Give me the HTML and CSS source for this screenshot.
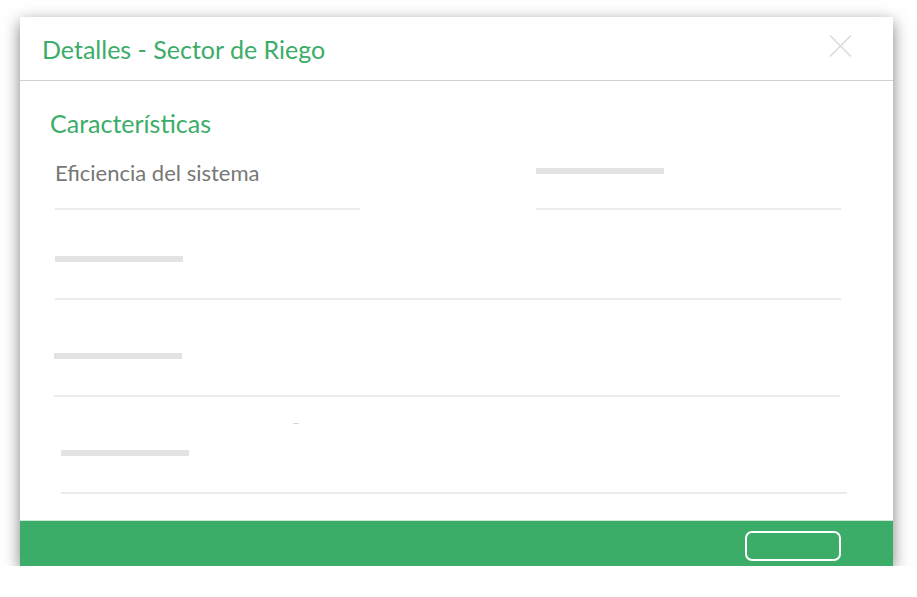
FILE: index.html
```html
<!DOCTYPE html>
<html lang="es">
<head>
<meta charset="utf-8">
<title>Detalles - Sector de Riego</title>
<link rel="stylesheet" href="styles.css">
</head>
<body>
<div class="modal">
  <div class="modal-header">
    <h4 class="modal-title">Detalles - Sector de Riego</h4>
    <button class="close" aria-label="Cerrar">
      <svg width="23" height="22" viewBox="0 0 23 22"><path d="M1 0.5 L22 21.5 M22 0.5 L1 21.5" stroke="#dcdcdc" stroke-width="1.6" fill="none"/></svg>
    </button>
  </div>
  <div class="modal-body">
    <h3 class="section-title">Características</h3>
    <div class="row row-1">
      <div class="field">
        <span class="label-text">Eficiencia del sistema</span>
      </div>
      <div class="field">
        <span class="bar bar-top"></span>
      </div>
    </div>
    <div class="row row-2">
      <div class="field field-wide">
        <span class="bar"></span>
      </div>
    </div>
    <div class="row row-3">
      <div class="field field-wide">
        <span class="bar"></span>
      </div>
      <span class="dash"></span>
    </div>
    <div class="row row-4">
      <div class="field field-wide">
        <span class="bar"></span>
      </div>
    </div>
  </div>
  <div class="modal-footer">
    <button class="btn-outline"></button>
  </div>
</div>
</body>
</html>
```

FILE: styles.css
```css
html, body {
  margin: 0;
  padding: 0;
  background: #ffffff;
}

body {
  font-family: Lato, "Open Sans", "Liberation Sans", sans-serif;
}

.modal {
  margin: 17px 0 0 20px;
  width: 873px;
  height: 549px;
  background: #ffffff;
  display: flex;
  flex-direction: column;
  box-shadow: 0 5px 15px rgba(0, 0, 0, 0.5);
}

.modal-header {
  height: 64px;
  box-sizing: border-box;
  border-bottom: 1px solid #cfcfcf;
  display: flex;
  align-items: center;
  justify-content: space-between;
  padding: 0 41px 0 22px;
}

.modal-title {
  margin: 0;
  font-weight: 400;
  font-size: 25px;
  color: #3bad68;
  line-height: 30px;
}

.close {
  border: 0;
  background: none;
  padding: 0;
  margin-top: -6px;
  width: 23px;
  height: 22px;
  display: block;
}

.modal-body {
  flex: 1;
  padding: 27px 0 0 30px;
}

.section-title {
  margin: 0 0 24px 0;
  font-weight: 400;
  font-size: 25px;
  line-height: 30px;
  color: #3bad68;
}

.row {
  display: flex;
  gap: 176px;
  position: relative;
}

.field {
  width: 305px;
  height: 48px;
  box-sizing: border-box;
  border-bottom: 2px solid #ebebeb;
  display: flex;
  align-items: flex-start;
}

.field-wide {
  width: 786px;
  height: 44px;
}

.row-1 { margin-left: 5px; }
.row-2 { margin-left: 5px; margin-top: 46px; }
.row-3 { margin-left: 4px; margin-top: 53px; }
.row-4 { margin-left: 11px; margin-top: 53px; }

.label-text {
  font-size: 22px;
  line-height: 26px;
  margin-top: -2px;
  color: #777777;
}

.bar {
  display: block;
  width: 128px;
  height: 6px;
  background: #e3e3e3;
}

.bar-top {
  margin-top: 6px;
}

.dash {
  position: absolute;
  left: 239px;
  top: 70px;
  width: 6px;
  height: 1px;
  background: #d8d8d8;
}

.modal-footer {
  height: 46px;
  box-sizing: border-box;
  background: #3bad68;
  border-top: 1px solid #cde8d6;
  display: flex;
  justify-content: flex-end;
  align-items: center;
  padding: 0 52px 0 0;
}

.btn-outline {
  width: 96px;
  height: 30px;
  box-sizing: border-box;
  border: 2px solid #ffffff;
  border-radius: 7px;
  background: transparent;
  margin-top: 4px;
}
```
